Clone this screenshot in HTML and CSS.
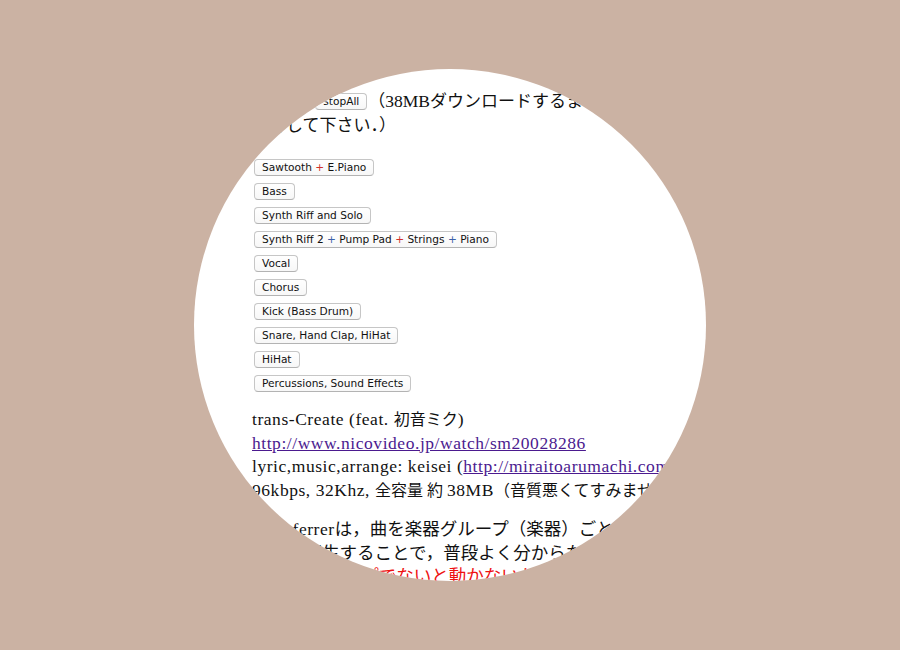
FILE: index.html
```html
<!DOCTYPE html>
<html lang="ja">
<head>
<meta charset="utf-8">
<title>Music Referrer</title>
<link rel="stylesheet" href="styles.css">
</head>
<body>
<div class="lens">
  <div class="page">
    <p class="intro"><button class="btn">playAll</button> <button class="btn">stopAll</button><span class="paren">（<span class="lat">38MB</span>ダウンロードするまで少し時間がかかります．終わったら再生ボタンを<br>を押して下さい．）</span></p>

    <div class="tracks">
      <button class="btn">Sawtooth <span class="plus">+</span> E.Piano</button>
      <button class="btn">Bass</button>
      <button class="btn">Synth Riff and Solo</button>
      <button class="btn">Synth Riff 2 <span class="plus alt">+</span> Pump Pad <span class="plus">+</span> Strings <span class="plus alt">+</span> Piano</button>
      <button class="btn">Vocal</button>
      <button class="btn">Chorus</button>
      <button class="btn">Kick (Bass Drum)</button>
      <button class="btn">Snare, Hand Clap, HiHat</button>
      <button class="btn">HiHat</button>
      <button class="btn">Percussions, Sound Effects</button>
    </div>

    <p class="credits"><span class="lat">trans-Create (feat. </span>初音ミク<span class="lat">)</span><br>
    <a class="lat" href="#">http://www.nicovideo.jp/watch/sm20028286</a><br>
    <span class="lat">lyric,music,arrange: keisei (</span><a class="lat" href="#">http://miraitoarumachi.com/</a><span class="lat">)</span><br>
    <span class="lat">96kbps, 32Khz, </span>全容量 約 <span class="lat">38MB</span>（音質悪くてすみません）</p>

    <p class="about"><span class="lat">Referrer</span>は，曲を楽器グループ（楽器）ごとに分けて<br>個別に再生することで，普段よく分からない音まで聴けるようにしたものです．<br><span class="warn">※ デスクトップでないと動かないかもしれません．</span></p>
  </div>
</div>
</body>
</html>
```

FILE: styles.css
```css
html, body {
  margin: 0;
  padding: 0;
  width: 900px;
  height: 650px;
  overflow: hidden;
  background: #cbb2a3;
}

.lens {
  width: 900px;
  height: 650px;
  background: #ffffff;
  clip-path: circle(256px at 450px 325px);
  overflow: hidden;
}

.page {
  padding: 90px 0 0 252px;
  font-family: "Liberation Serif", "Noto Sans CJK JP", serif;
  font-size: 17.5px;
  line-height: 23.5px;
  color: #111;
  white-space: nowrap;
}

.page p {
  margin: 0;
}

.lat {
  font-size: 17.5px;
  letter-spacing: 0.55px;
}

.intro {
  font-size: 17px;
  margin-bottom: 22px !important;
}

.intro .lat {
  letter-spacing: 0;
}

.paren {
  margin-left: 1px;
}

.btn {
  display: inline-block;
  box-sizing: border-box;
  height: 17px;
  margin: 0 0 0 2px;
  padding: 0 7px;
  font-family: "DejaVu Sans", "Liberation Sans", sans-serif;
  font-size: 10.6px;
  line-height: 15px;
  color: #111;
  background: linear-gradient(#ffffff, #f7f7f7);
  border: 1px solid #c6c6c6;
  border-bottom-color: #b3b3b3;
  border-radius: 4px;
  vertical-align: 2px;
}

.intro .btn:first-child {
  width: 55px;
}

.tracks {
  display: flex;
  flex-direction: column;
  align-items: flex-start;
  gap: 7px;
  margin-bottom: 16px;
}

.plus {
  color: #d0302a;
}

.plus.alt {
  color: #3b5fa8;
}

.credits {
  font-size: 16px;
  margin-bottom: 16px !important;
}

.credits a {
  color: #4b1a8f;
  text-decoration: underline;
}

.about {
  text-indent: 20px;
}

.warn {
  color: #ee1111;
}
```
